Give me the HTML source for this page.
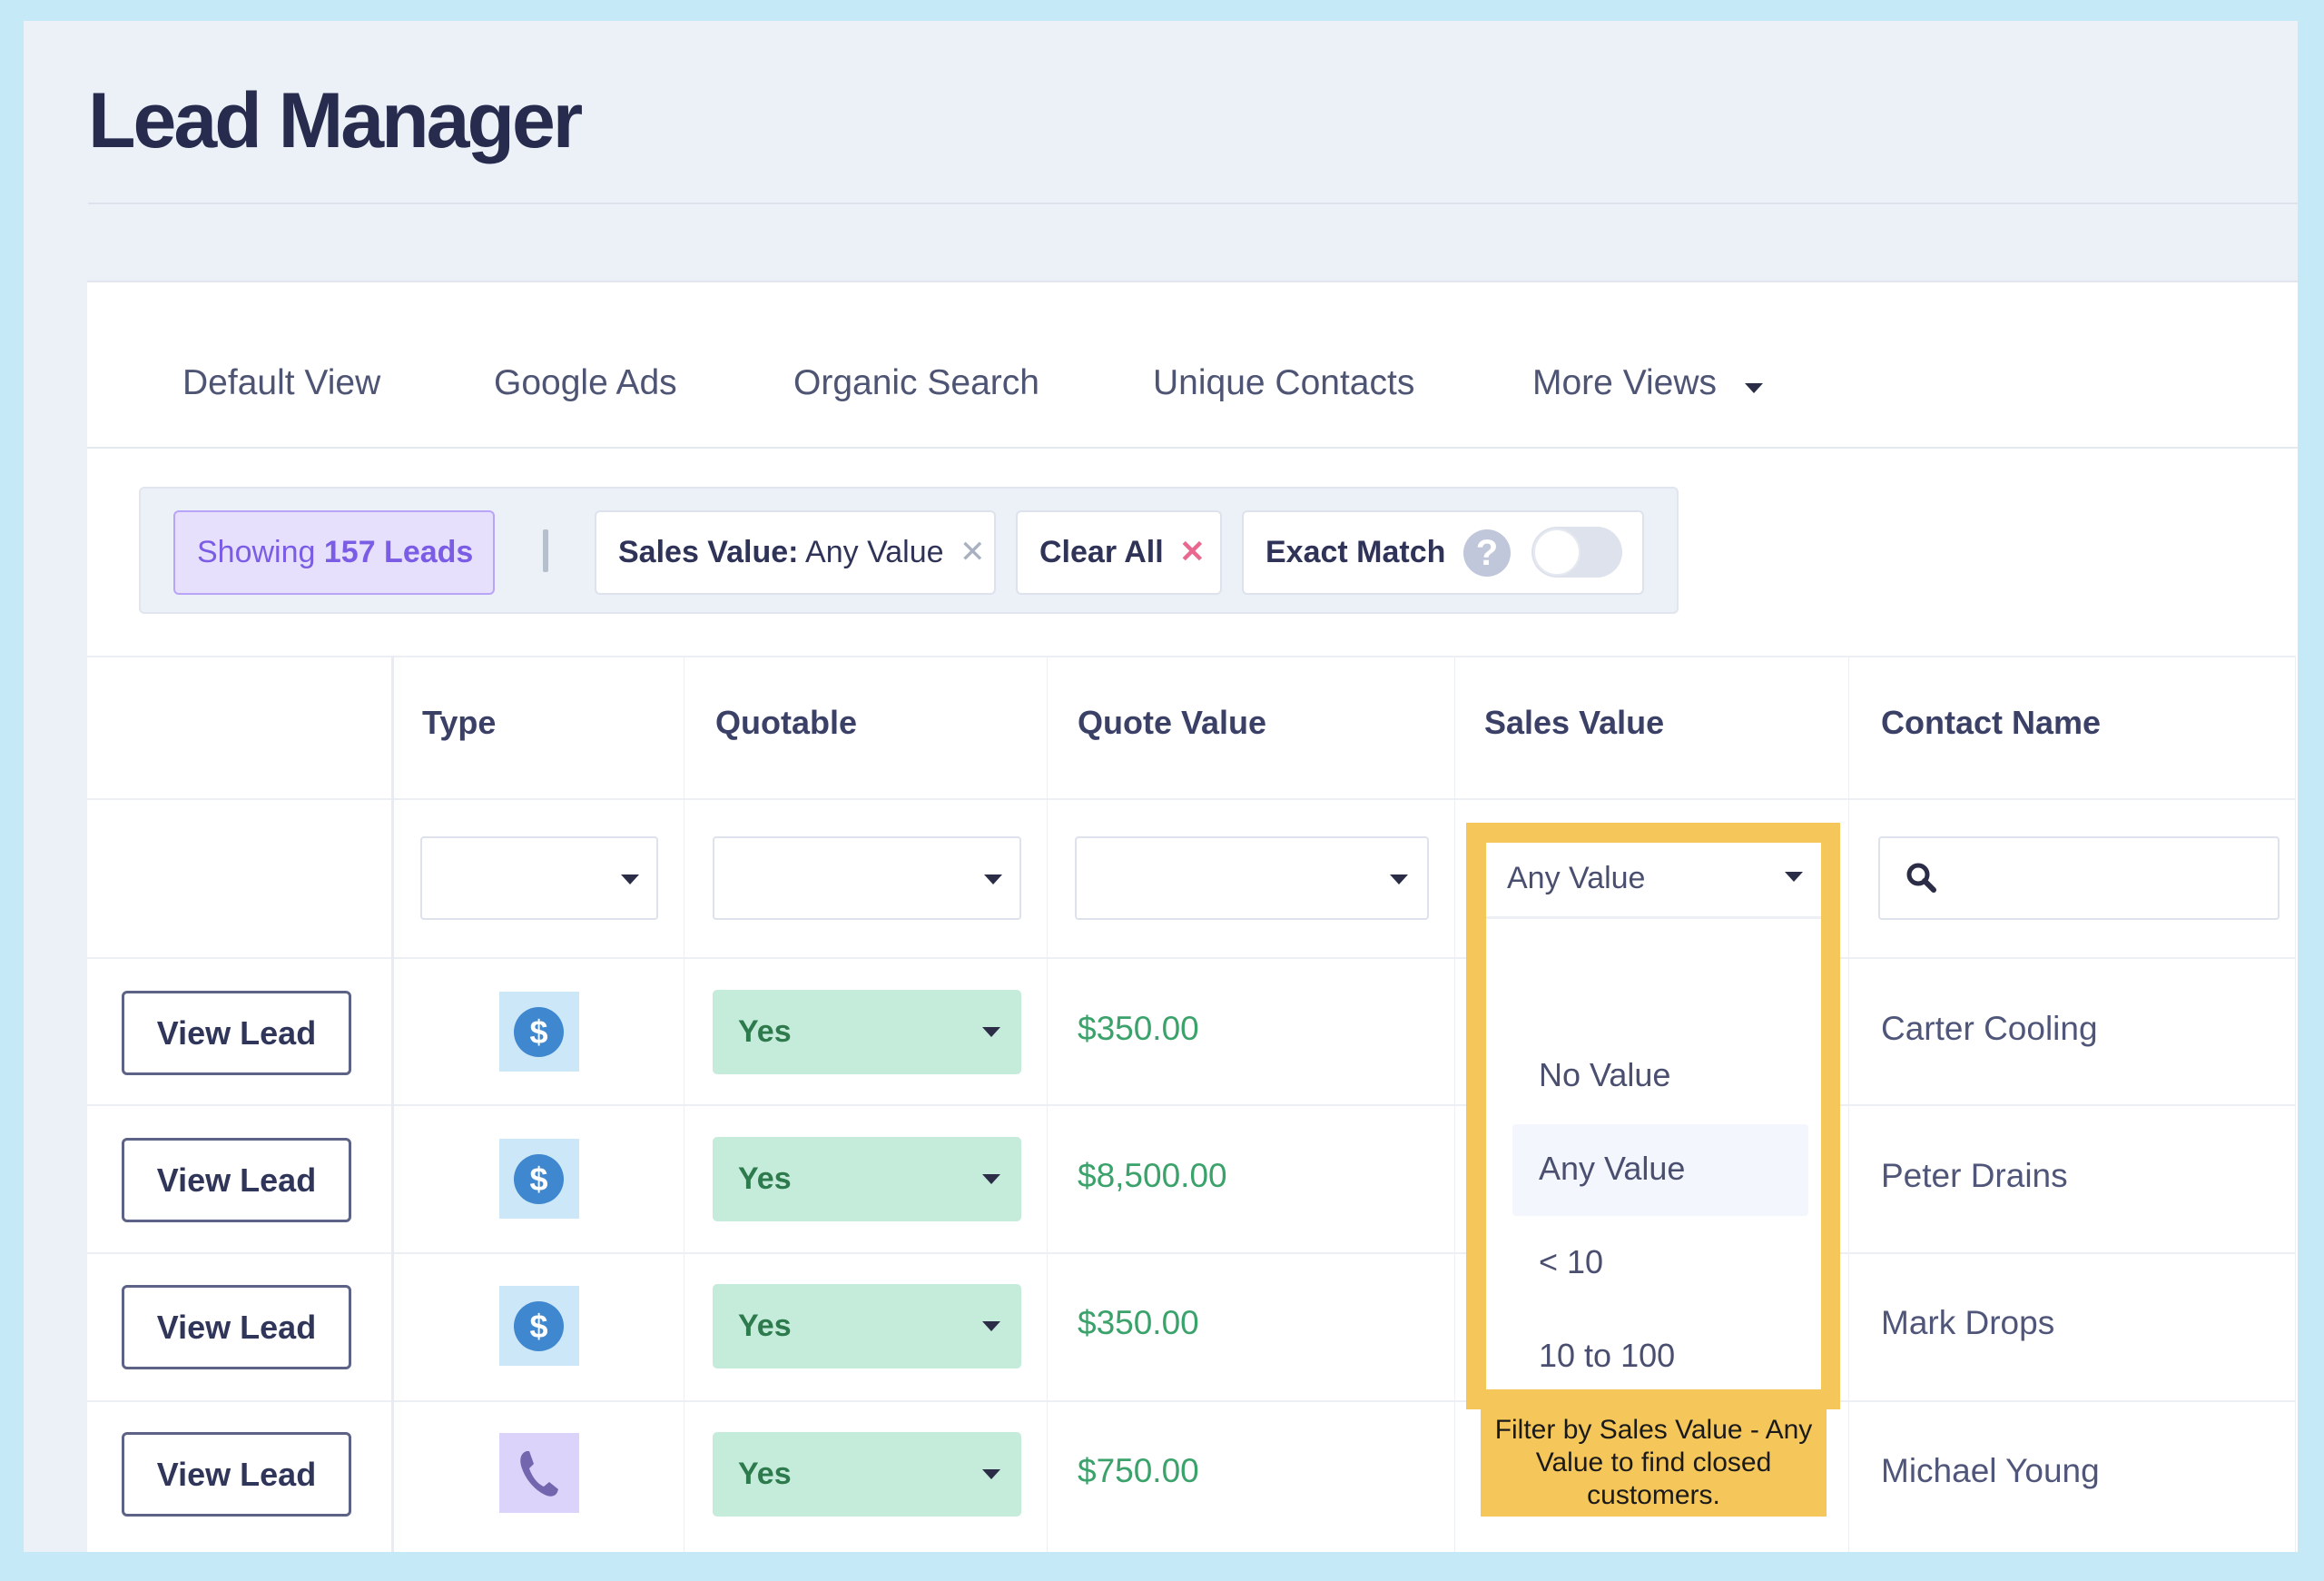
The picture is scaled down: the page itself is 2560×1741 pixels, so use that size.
<!DOCTYPE html>
<html><head><meta charset="utf-8"><style>
*{box-sizing:border-box;margin:0;padding:0}
body{width:2560px;height:1741px;background:#c5e9f7;font-family:"Liberation Sans",Arial,sans-serif;color:#3b3f63;position:relative;overflow:hidden}
.abs{position:absolute}
#panel{left:26px;top:23px;width:2505px;height:1686px;background:#ecf1f8}
h1{position:absolute;left:97px;top:84px;font-size:86px;font-weight:700;color:#272b4d;letter-spacing:-3px}
#card{left:96px;top:309px;width:2435px;height:1400px;background:#fff;border-top:2px solid #e1e6ee}
.tab{position:absolute;top:400px;font-size:39px;color:#4e5473}
.chip{position:absolute;top:562px;height:93px;background:#fff;border:2px solid #dde2ec;border-radius:6px;font-size:34px;line-height:89px;padding-left:24px;color:#2e3357}
.hd{position:absolute;top:775px;font-size:36px;font-weight:700;color:#3b4066}
.vl{position:absolute;top:1055px;width:1px;background:#eceff4;height:654px}
.hl{position:absolute;left:96px;width:2432px;height:2px;background:#eceff4}
.sel{position:absolute;top:921px;height:92px;border:2px solid #dde2ec;border-radius:4px;background:#fff}
.tri{position:absolute;width:0;height:0;border-left:10px solid transparent;border-right:10px solid transparent;border-top:11px solid #2a2d45}
.btn{position:absolute;left:134px;width:253px;height:93px;border:3px solid #5d6386;border-radius:6px;font-size:36px;font-weight:700;text-align:center;line-height:87px;color:#30355a}
.ico{position:absolute;left:550px;width:88px;height:88px;background:#cbe7f8}
.yes{position:absolute;left:785px;width:340px;height:93px;background:#c5ebdb;border-radius:5px;font-size:34px;font-weight:700;color:#2d7a4c;line-height:93px;padding-left:28px}
.amt{position:absolute;left:1187px;font-size:37px;color:#3aa26a}
.nm{position:absolute;left:2072px;font-size:37px;color:#50567a}
.opt{position:absolute;left:1695px;font-size:36px;color:#4a4f70}
</style></head><body>
<div id="panel" class="abs"></div>
<h1>Lead Manager</h1>
<div class="abs" style="left:97px;top:223px;width:2434px;height:2px;background:#dde3ec"></div>
<div id="card" class="abs"></div>
<div class="tab" style="left:201px">Default View</div>
<div class="tab" style="left:544px">Google Ads</div>
<div class="tab" style="left:874px">Organic Search</div>
<div class="tab" style="left:1270px">Unique Contacts</div>
<div class="tab" style="left:1688px">More Views</div>
<div class="tri" style="left:1922px;top:422px"></div>
<div class="abs" style="left:96px;top:492px;width:2435px;height:2px;background:#e4e8ef"></div>
<div class="abs" style="left:153px;top:536px;width:1696px;height:140px;background:#ecf1f8;border:2px solid #e0e5ee;border-radius:6px"></div>
<div class="chip" style="left:191px;width:354px;background:#e6e0fd;border-color:#b9a5f7;color:#7b5ce5;padding-left:24px">Showing <b>157 Leads</b></div>
<div class="abs" style="left:598px;top:583px;width:6px;height:47px;background:#b6bfcc;border-radius:2px"></div>
<div class="chip" style="left:655px;width:442px"><b>Sales Value:</b> Any Value <span style="color:#a9b0c0;margin-left:8px">✕</span></div>
<div class="chip" style="left:1119px;width:227px"><b>Clear All</b> <span style="color:#e8688f;font-weight:700;margin-left:8px">✕</span></div>
<div class="chip" style="left:1368px;width:443px"><b>Exact Match</b></div>
<div class="abs" style="left:1612px;top:583px;width:52px;height:52px;border-radius:50%;background:#c1c7da;color:#fff;font-weight:700;font-size:40px;text-align:center;line-height:52px">?</div>
<div class="abs" style="left:1687px;top:580px;width:100px;height:56px;border-radius:28px;background:#dde2ec"></div>
<div class="abs" style="left:1689px;top:582px;width:52px;height:52px;border-radius:50%;background:#fff;border:2px solid #e6e9f0"></div>
<div class="hl" style="top:722px"></div>
<div class="hl" style="top:879px"></div>
<div class="hl" style="top:1054px"></div>
<div class="hl" style="top:1216px"></div>
<div class="hl" style="top:1379px"></div>
<div class="hl" style="top:1542px"></div>
<div class="vl" style="left:431px;top:722px;height:987px;width:3px;background:#e8ebf1;box-shadow:4px 0 8px rgba(0,0,0,0.04)"></div>
<div class="vl" style="left:753px;top:722px;height:987px"></div>
<div class="vl" style="left:1153px;top:722px;height:987px"></div>
<div class="vl" style="left:1602px;top:722px;height:987px"></div>
<div class="vl" style="left:2036px;top:722px;height:987px"></div>
<div class="vl" style="left:2528px;top:722px;height:987px"></div>
<div class="hd" style="left:465px">Type</div>
<div class="hd" style="left:788px">Quotable</div>
<div class="hd" style="left:1187px">Quote Value</div>
<div class="hd" style="left:1635px">Sales Value</div>
<div class="hd" style="left:2072px">Contact Name</div>
<div class="sel" style="left:463px;width:262px"><div class="tri" style="left:219px;top:40px"></div></div>
<div class="sel" style="left:785px;width:340px"><div class="tri" style="left:297px;top:40px"></div></div>
<div class="sel" style="left:1184px;width:390px"><div class="tri" style="left:345px;top:40px"></div></div>
<div class="sel" style="left:2069px;width:442px"><svg class="abs" style="left:28px;top:26px" width="36" height="36" viewBox="0 0 36 36"><circle cx="14" cy="14" r="10" fill="none" stroke="#2a2d45" stroke-width="5"/><path d="M21 21l10 10" stroke="#2a2d45" stroke-width="6" stroke-linecap="round"/></svg></div>
<div class="btn" style="top:1091px">View Lead</div>
<div class="btn" style="top:1253px">View Lead</div>
<div class="btn" style="top:1415px">View Lead</div>
<div class="btn" style="top:1577px">View Lead</div>
<div class="ico" style="top:1092px"><div class="abs" style="left:16px;top:17px;width:55px;height:55px;border-radius:50%;background:#3f87cf;color:#fff;font-weight:700;font-size:36px;text-align:center;line-height:55px">$</div></div>
<div class="ico" style="top:1254px"><div class="abs" style="left:16px;top:17px;width:55px;height:55px;border-radius:50%;background:#3f87cf;color:#fff;font-weight:700;font-size:36px;text-align:center;line-height:55px">$</div></div>
<div class="ico" style="top:1416px"><div class="abs" style="left:16px;top:17px;width:55px;height:55px;border-radius:50%;background:#3f87cf;color:#fff;font-weight:700;font-size:36px;text-align:center;line-height:55px">$</div></div>
<div class="ico" style="top:1578px;background:#dcd3fa"><svg class="abs" style="left:18px;top:16px" width="54" height="58" viewBox="0 0 54 58"><path d="M12 4c-6 2-8 8-6 16 4 14 14 26 26 32 6 3 12 2 14-3l1-3-10-8-6 5C24 40 18 32 15 23l5-5L15 4z" fill="#7466ae"/></svg></div>
<div class="yes" style="top:1090px">Yes<div class="tri" style="left:297px;top:41px"></div></div>
<div class="yes" style="top:1252px">Yes<div class="tri" style="left:297px;top:41px"></div></div>
<div class="yes" style="top:1414px">Yes<div class="tri" style="left:297px;top:41px"></div></div>
<div class="yes" style="top:1577px">Yes<div class="tri" style="left:297px;top:41px"></div></div>
<div class="amt" style="top:1112px">$350.00</div>
<div class="amt" style="top:1274px">$8,500.00</div>
<div class="amt" style="top:1436px">$350.00</div>
<div class="amt" style="top:1599px">$750.00</div>
<div class="nm" style="top:1112px">Carter Cooling</div>
<div class="nm" style="top:1274px">Peter Drains</div>
<div class="nm" style="top:1436px">Mark Drops</div>
<div class="nm" style="top:1599px">Michael Young</div>
<div class="abs" style="left:1615px;top:906px;width:412px;height:646px;border:22px solid #f5c65a"></div>
<div class="abs" style="left:1637px;top:928px;width:369px;height:602px;background:#fff"></div>
<div class="abs" style="left:1637px;top:928px;width:369px;height:84px;border-bottom:3px solid #eceff4"></div>
<div class="abs" style="left:1660px;top:948px;font-size:34px;color:#4a4f70">Any Value</div>
<div class="tri" style="left:1966px;top:960px"></div>
<div class="abs" style="left:1666px;top:1238px;width:326px;height:101px;background:#f3f6fd;border-radius:4px"></div>
<div class="opt" style="top:1163px">No Value</div>
<div class="opt" style="top:1266px">Any Value</div>
<div class="opt" style="top:1369px">&lt; 10</div>
<div class="opt" style="top:1472px">10 to 100</div>
<div class="abs" style="left:1631px;top:1552px;width:381px;height:118px;background:#f5c65a;color:#1a1a1a;font-size:30px;line-height:36px;text-align:center;padding-top:5px">Filter by Sales Value - Any Value to find closed customers.</div>
</body></html>
